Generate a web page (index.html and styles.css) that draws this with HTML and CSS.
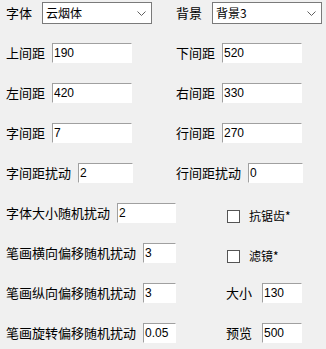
FILE: index.html
```html
<!DOCTYPE html>
<html lang="zh">
<head>
<meta charset="utf-8">
<link rel="stylesheet" href="styles.css">
</head>
<body>
<div class="form">
  <div class="row row-combo">
    <div class="cell"><span class="label">字体</span><div class="combo gap10"><span>云烟体</span><svg class="chev" width="9" height="5" viewBox="0 0 9 5"><path d="M0.5 0.5 L4.5 4.5 L8.5 0.5" fill="none" stroke="#606060" stroke-width="1"/></svg></div></div>
    <div class="cell"><span class="label">背景</span><div class="combo gap10"><span>背景3</span><svg class="chev" width="9" height="5" viewBox="0 0 9 5"><path d="M0.5 0.5 L4.5 4.5 L8.5 0.5" fill="none" stroke="#606060" stroke-width="1"/></svg></div></div>
  </div>
  <div class="row">
    <div class="cell"><span class="label">上间距</span><div class="edit w80">190</div></div>
    <div class="cell"><span class="label">下间距</span><div class="edit w80">520</div></div>
  </div>
  <div class="row">
    <div class="cell"><span class="label">左间距</span><div class="edit w80">420</div></div>
    <div class="cell"><span class="label">右间距</span><div class="edit w80">330</div></div>
  </div>
  <div class="row">
    <div class="cell"><span class="label">字间距</span><div class="edit w80">7</div></div>
    <div class="cell"><span class="label">行间距</span><div class="edit w80">270</div></div>
  </div>
  <div class="row">
    <div class="cell"><span class="label">字间距扰动</span><div class="edit w55">2</div></div>
    <div class="cell"><span class="label">行间距扰动</span><div class="edit w55">0</div></div>
  </div>
  <div class="row">
    <div class="cell"><span class="label">字体大小随机扰动</span><div class="edit w64">2</div></div>
    <div class="cell shift"><label class="check"><span class="box"></span><span class="check-text">抗锯齿*</span></label></div>
  </div>
  <div class="row">
    <div class="cell"><span class="label">笔画横向偏移随机扰动</span><div class="edit w38">3</div></div>
    <div class="cell shift"><label class="check"><span class="box"></span><span class="check-text">滤镜*</span></label></div>
  </div>
  <div class="row">
    <div class="cell"><span class="label">笔画纵向偏移随机扰动</span><div class="edit w38">3</div></div>
    <div class="cell shift2"><span class="label">大小</span><div class="edit w40 gap10">130</div></div>
  </div>
  <div class="row">
    <div class="cell"><span class="label">笔画旋转偏移随机扰动</span><div class="edit w38">0.05</div></div>
    <div class="cell shift2"><span class="label">预览</span><div class="edit w40 gap10">500</div></div>
  </div>
</div>
</body>
</html>
```

FILE: styles.css
```css
html, body {
  margin: 0;
  padding: 0;
  background: #f0f0f0;
  width: 326px;
  height: 349px;
  overflow: hidden;
  font-family: "Noto Sans CJK SC", "Liberation Sans", sans-serif;
  color: #000;
}

.form {
  display: flex;
  flex-direction: column;
  gap: 20px;
  padding-top: 2px;
}

.row {
  display: grid;
  grid-template-columns: 170px 150px;
  padding-left: 6px;
  height: 20px;
}

.row-combo {
  height: 22px;
  margin-bottom: -1px;
}

.cell {
  display: flex;
  align-items: center;
  height: 100%;
}

.shift { padding-left: 51px; }
.shift2 { padding-left: 50px; }

.label {
  font-size: 13px;
  line-height: 20px;
  white-space: nowrap;
  letter-spacing: 0;
}

.edit {
  box-sizing: border-box;
  height: 20px;
  margin-left: 7px;
  background: #fff;
  border-top: 1px solid #a0a0a0;
  border-left: 1px solid #a0a0a0;
  border-right: 1px solid #fff;
  border-bottom: 1px solid #fff;
  font-family: "Liberation Sans", "Noto Sans CJK SC", sans-serif;
  font-size: 12px;
  line-height: 18px;
  padding-left: 1px;
  overflow: hidden;
  white-space: nowrap;
  color: #000;
}

.edit.gap10, .combo.gap10 { margin-left: 10px; }

.w80 { width: 80px; }
.w55 { width: 55px; }
.w64 { width: 64px; }
.w38 { width: 38px; }
.w40 { width: 40px; }

.combo {
  box-sizing: border-box;
  width: 110px;
  height: 22px;
  background: #fff;
  border: 1px solid #7a7a7a;
  display: flex;
  align-items: center;
  justify-content: space-between;
  padding: 0 5px 0 3px;
  font-size: 12px;
  font-family: "Noto Sans CJK SC", "Liberation Sans", sans-serif;
}

.combo span { line-height: 20px; }

.chev { display: block; margin-top: 1px; }

.check {
  display: flex;
  align-items: center;
  margin-top: 6px;
}

.box {
  box-sizing: border-box;
  width: 13px;
  height: 13px;
  border: 1px solid #555;
  background: #fff;
}

.check-text {
  margin-left: 9px;
  font-size: 12px;
  line-height: 14px;
}
```
